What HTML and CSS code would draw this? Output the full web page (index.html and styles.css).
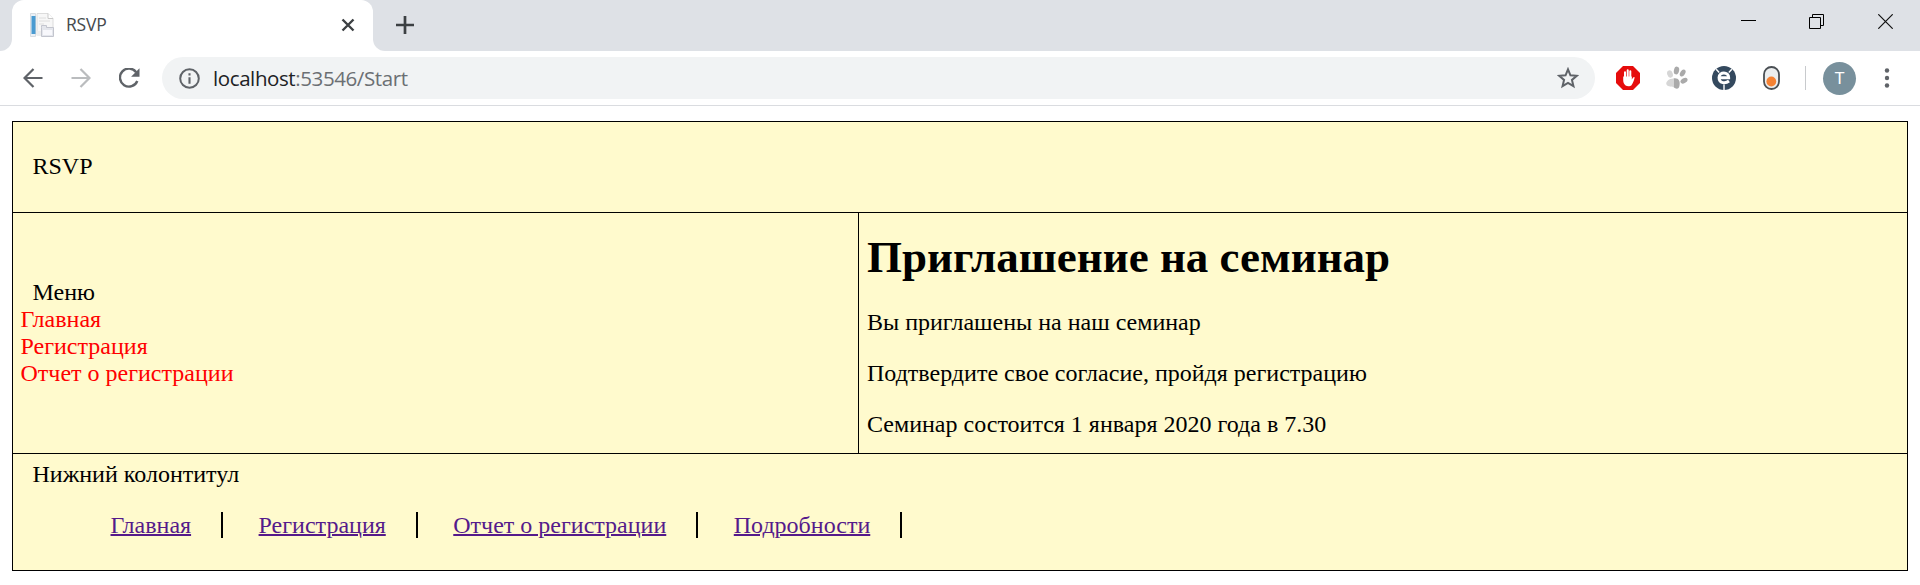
FILE: index.html
```html
<!DOCTYPE html>
<html lang="ru">
<head>
<meta charset="utf-8">
<title>RSVP</title>
<link rel="stylesheet" href="styles.css">
</head>
<body>
<header class="tabstrip">
  <div class="tab-edge"></div>
  <div class="tab">
    <svg class="favicon" width="24" height="24" viewBox="0 0 24 24">
      <path d="M7 .5h11l5 5v17H7z" fill="#f7f7f7" stroke="#dcdcdc"/>
      <path d="M18 .5v5h5" fill="#fff" stroke="#c9c9c9"/>
      <path d="M9 5h7M9 8h11M9 11h5" stroke="#dedede"/>
      <path d="M.5 .5h5v23h-5z" fill="#eaf1f7" stroke="#d8dde2"/>
      <path d="M1.500 3h4v18h-4z" fill="#4a9bd1"/>
      <path d="M7 18h4v5H7z" fill="#eee"/>
      <path d="M11.500 14.500v-2h5v2h7v9h-12z" fill="#e4e6ec" stroke="#c3c5ce"/>
      <path d="M13 17h9v5h-9z" fill="#f8f8fc"/>
    </svg>
    <span class="tab-title">RSVP</span>
    <svg class="tab-close" width="14" height="14" viewBox="0 0 14 14"><path d="M1.500 1.500l11 11m0-11l-11 11" stroke="#3c4043" stroke-width="2.400"/></svg>
  </div>
  <div class="strip-rest">
    <svg class="new-tab" width="18" height="18" viewBox="0 0 18 18"><path d="M9 0v18M0 9h18" stroke="#3c4043" stroke-width="2.700"/></svg>
    <svg class="win-min" width="15" height="15" viewBox="0 0 15 15"><path d="M0 6.500h15" stroke="#000"/></svg>
    <svg class="win-restore" width="15" height="15" viewBox="0 0 15 15" fill="none" stroke="#000"><path d="M.5 3.500h11v11H.5zM3.500 3.500v-3h11v11h-3"/></svg>
    <svg class="win-close" width="15" height="15" viewBox="0 0 15 15"><path d="M.3 .3l14.400 14.400m0-14.400L.3 14.700" stroke="#111" stroke-width="1.200"/></svg>
  </div>
</header>
<div class="toolbar">
  <svg class="back" width="20" height="20" viewBox="0 0 20 20" fill="none" stroke="#5f6368" stroke-width="2.200"><path d="M19.500 10H2M10.500 .9L1.500 10l9 9.100"/></svg>
  <svg class="forward" width="20" height="20" viewBox="0 0 20 20" fill="none" stroke="#babcbe" stroke-width="2.200"><path d="M.5 10H18M9.500 .9l9 9.100-9 9.100"/></svg>
  <svg class="reload" width="21" height="20" viewBox="0 0 21 20"><path d="M17.200 4.200A9 9 0 1 0 18.300 13" fill="none" stroke="#5f6368" stroke-width="2.400"/><path d="M20.500 .3v8.400h-8.400z" fill="#5f6368"/></svg>
  <div class="omnibox">
    <svg class="info" width="21" height="21" viewBox="0 0 21 21"><circle cx="10.500" cy="10.500" r="9.300" fill="none" stroke="#5f6368" stroke-width="2"/><path d="M10.500 5.200v2.200M10.500 9.200v6.500" stroke="#5f6368" stroke-width="2.100"/></svg>
    <span class="url"><span class="host">localhost</span>:53546/Start</span>
    <svg class="star" width="22" height="22" viewBox="0 0 22 22"><path d="M11 2.300l2.450 6 6.350.5-4.850 4.150 1.500 6.250L11 15.850 5.550 19.200l1.500-6.250L2.200 8.800l6.350-.5z" fill="none" stroke="#5f6368" stroke-width="2"/></svg>
  </div>
  <svg class="ext-hand" width="24" height="24" viewBox="0 0 24 24"><path d="M7 0h10l7 7v10l-7 7H7l-7-7V7z" fill="#e60c0c"/><path d="M9 14V6.300M11.700 12V4.300M14.300 12V5.300" stroke="#fff" stroke-width="2" stroke-linecap="round"/><path d="M7.200 10.500h8.600v3l1.300-2c.8-1 1.700-.6 1.500.2-.5 2.300-1.700 6-3.300 7.700-1.200 1.100-4.300 1.100-5.700 0C7.800 18 7.200 16 7.200 14z" fill="#fff"/></svg>
  <svg class="ext-paw" width="22" height="24" viewBox="0 0 22 24"><g fill="#aaa"><ellipse cx="10.500" cy="4.500" rx="2.600" ry="3.900" transform="rotate(12 10.500 4.500)"/><ellipse cx="16.700" cy="7" rx="2.400" ry="3.800" transform="rotate(32 16.700 7)"/><ellipse cx="18" cy="14.700" rx="3.800" ry="2.400" transform="rotate(-30 18 14.700)"/><path d="M7.500 12.500c5-1 7 3 6 7-.5 4-3.500 4-6 1.500z"/></g><g fill="#d6d6d6"><ellipse cx="4" cy="8" rx="2.800" ry="3.700" transform="rotate(-18 4 8)"/><path d="M7.500 12.500C3 12.500 0 15.500.3 18c.5 2.600 4.500 2.500 7.200 3z"/></g></svg>
  <svg class="ext-e" width="24" height="24" viewBox="0 0 24 24"><circle cx="12" cy="12" r="12" fill="#34495e"/><path d="M7.500 11.700h9.200c.2-6.300-9.700-6.300-9.700-.2 0 6 6.500 6.300 10 3.500" fill="none" stroke="#fff" stroke-width="2.900"/><path d="M12 18.500V24M4.200 3.200l3 3.300M19.800 3.200l-3 3.300" stroke="#fff" stroke-width="1.400"/></svg>
  <svg class="ext-toggle" width="17" height="24" viewBox="0 0 17 24"><rect x="1" y="1" width="15" height="22" rx="7.500" fill="#eceeef" stroke="#4a4f54" stroke-width="1.800"/><circle cx="8.300" cy="15.500" r="4.900" fill="#f58233"/></svg>
  <div class="divider"></div>
  <div class="avatar">T</div>
  <svg class="dots" width="6" height="20" viewBox="0 0 6 20" fill="#5f6368"><circle cx="3" cy="2.500" r="2.200"/><circle cx="3" cy="10" r="2.200"/><circle cx="3" cy="17.500" r="2.200"/></svg>
</div>
<main class="layout">
  <div class="banner">RSVP</div>
  <div class="middle">
    <nav class="menu">
      <div class="menu-title">Меню</div>
      <a>Главная</a>
      <a>Регистрация</a>
      <a>Отчет о регистрации</a>
    </nav>
    <section class="content">
      <h1>Приглашение на семинар</h1>
      <p>Вы приглашены на наш семинар</p>
      <p>Подтвердите свое согласие, пройдя регистрацию</p>
      <p>Семинар состоится 1 января 2020 года в 7.30</p>
    </section>
  </div>
  <footer class="footer">
    <div class="footer-title">Нижний колонтитул</div>
    <ul class="footer-nav">
      <li><a href="#">Главная</a></li>
      <li><a href="#">Регистрация</a></li>
      <li><a href="#">Отчет о регистрации</a></li>
      <li><a href="#">Подробности</a></li>
    </ul>
  </footer>
</main>
</body>
</html>
```
FILE: styles.css
```css
* { box-sizing: border-box; }
body { margin: 0; height: 585px; overflow: hidden; background: #fff; font: 24px/27px "Liberation Serif", serif; color: #000; }
svg { display: block; flex: none; }

.tabstrip { display: flex; height: 51px; background: #fff; }
.tab-edge { width: 12px; background: #dee1e6; border-bottom-right-radius: 12px; }
.tab { display: flex; align-items: flex-start; width: 361px; padding-left: 18px; background: linear-gradient(#dee1e6, #dee1e6) top / 100% 14px no-repeat; position: relative; isolation: isolate; }
.tab::before { content: ""; position: absolute; inset: 0; z-index: -1; background: #fff; border-radius: 12px 12px 0 0; }
.favicon { margin-top: 13px; }
.tab-title { margin: 10px auto 0 12px; font: 17.5px/28px "Open Sans", sans-serif; letter-spacing: -0.2px; color: #45494d; }
.tab-close { margin: 18px 18px 0 0; }
.strip-rest { display: flex; flex: 1; background: #dee1e6; border-bottom-left-radius: 12px; }
.new-tab { margin: 16px auto 0 23px; }
.win-min { margin: 14px 53px 0 0; }
.win-restore { margin: 14px 54px 0 0; }
.win-close { margin: 14px 27px 0 0; }

.toolbar { display: flex; align-items: center; height: 55px; padding: 0 19px 0 23px; border-bottom: 1px solid #dadce0; }
.forward { margin-left: 28px; }
.reload { margin-left: 28px; }
.omnibox { display: flex; align-items: center; width: 1433px; height: 42px; margin-left: 22px; padding: 0 16.5px 0 17px; border-radius: 21px; background: #f1f3f4; }
.url { margin: 0 auto 0 13px; font: 20.5px/28px "Open Sans", sans-serif; letter-spacing: -0.4px; color: #6b6f73; }
.host { color: #202124; }
.ext-hand { margin-left: 21px; }
.ext-paw { margin-left: 26px; }
.ext-e { margin-left: 24px; }
.ext-toggle { margin-left: 27px; }
.divider { width: 1px; height: 24px; margin-left: 25px; background: #c8cacd; }
.avatar { width: 33px; height: 33px; margin-left: 17px; border-radius: 50%; background: #78909c; color: #fff; font: 17px/33px Roboto, sans-serif; text-align: center; }
.dots { margin-left: 28px; }

.layout { width: 1896px; height: 450px; margin: 15px 0 0 12px; border: 1px solid #000; background: #fffacd; display: grid; grid-template-rows: 91px 241px 1fr; }
.banner { padding: 31px 19px 0 19.5px; border-bottom: 1px solid #000; }
.middle { display: grid; grid-template-columns: 846px 1fr; border-bottom: 1px solid #000; }
.menu { display: flex; flex-direction: column; justify-content: center; padding-left: 7.5px; border-right: 1px solid #000; color: #f00; }
.menu-title { padding-left: 12px; color: #000; }
.content { padding: 17px 8px 0; }
.content h1 { margin: 0 0 25px; font-size: 45px; line-height: 54px; }
.content p { margin: 0 0 24px; }
.content p:last-child { margin-bottom: 0; }
.footer { padding-top: 7px; }
.footer-title { padding-left: 19.5px; }
.footer-nav { display: flex; margin: 24px 0 0; padding: 0 0 0 62px; list-style: none; }
.footer-nav li { height: 26px; padding: 0 30px 0 35.5px; border-right: 2px solid #000; }
.footer-nav a { color: #551a8b; text-decoration-thickness: 2px; }
```
